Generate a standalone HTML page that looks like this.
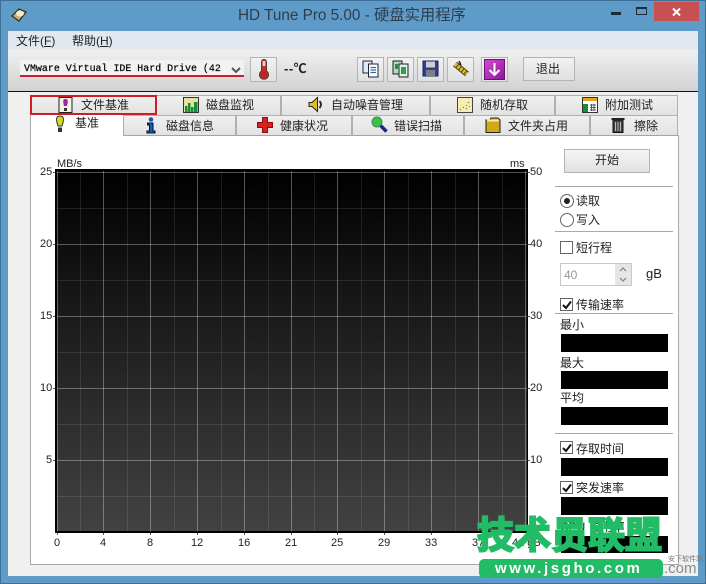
<!DOCTYPE html>
<html><head><meta charset="utf-8"><style>
*{box-sizing:border-box}
html,body{margin:0;padding:0}
body{width:706px;height:584px;position:relative;overflow:hidden;background:#5f9bc9;font-family:"Liberation Sans","Noto Sans CJK SC",sans-serif;font-size:12px;color:#222}
.a{position:absolute}
.t{position:absolute;white-space:nowrap;line-height:14px}
.tab{position:absolute;background:linear-gradient(#f0f0f0,#e2e2e2);border:1px solid #b0b0b0;border-bottom-color:#a4a4a4}
.btn{position:absolute;background:linear-gradient(#f2f2f2,#e0e0e0);border:1px solid #b4b4b4}
.blk{position:absolute;background:#000;left:561px;width:107px}
.line{position:absolute;background:#a8a8a8;height:1px}
.cb{position:absolute;width:13px;height:13px;border:1px solid #666;background:#fff}
svg{position:absolute;overflow:visible}
</style></head><body>
<div class="a" style="left:0;top:0;width:706px;height:1px;background:#3f6f96"></div>
<div class="a" style="left:0;top:0;width:1px;height:584px;background:#3f6f96"></div>
<div class="a" style="left:0;top:583px;width:706px;height:1px;background:#3f6f96"></div>
<div class="a" style="left:705px;top:0;width:1px;height:584px;background:#3f6f96"></div>
<!-- Title bar -->
<svg style="left:11px;top:7px" width="16" height="15"><path d="M1 9 L8 2 L15 5 L8 14 Z" fill="#c8b078" stroke="#3a3020" stroke-width="1.300"/><ellipse cx="9" cy="6.500" rx="4" ry="3" fill="#f4ecd0"/></svg>
<div class="t" style="left:238px;top:6px;font-size:15.300px;line-height:19px;color:#2d3d4d">HD Tune Pro 5.00 - 硬盘实用程序</div>
<div class="a" style="left:611px;top:12px;width:10px;height:3px;background:#1c2a38"></div>
<div class="a" style="left:636px;top:7px;width:11px;height:8px;border:1px solid #1c2a38;border-top-width:2px"></div>
<div class="a" style="left:654px;top:2px;width:45px;height:19px;background:#c75050"></div>
<svg style="left:672px;top:8px" width="9" height="8"><path d="M1 0.500L8 7.500M8 0.500L1 7.500" stroke="#fff" stroke-width="2"/></svg>
<!-- Client -->
<div class="a" style="left:8px;top:31px;width:690px;height:545px;background:#f0f0f0"></div>
<div class="a" style="left:8px;top:31px;width:690px;height:19px;background:#e1e8f0"></div>
<div class="t" style="left:16px;top:34px">文件(<u>F</u>)</div>
<div class="t" style="left:72px;top:34px">帮助(<u>H</u>)</div>
<div class="a" style="left:8px;top:50px;width:690px;height:41px;background:linear-gradient(#f0f0f0,#d2d2d2)"></div>
<div class="a" style="left:8px;top:91px;width:690px;height:1px;background:#111"></div>
<!-- Drive combo -->
<div class="a" style="left:20px;top:60px;width:224px;height:16px;background:#f2f2f2"></div>
<div class="t" style="left:24px;top:62px;font-family:'Liberation Mono',monospace;font-size:9.950px;color:#000;-webkit-text-stroke:.2px #000">VMware Virtual IDE Hard Drive (42</div>
<svg style="left:231px;top:67px" width="10" height="7"><path d="M1 1 L5 5 L9 1" fill="none" stroke="#555" stroke-width="2"/></svg>
<div class="a" style="left:20px;top:75px;width:224px;height:2px;background:#c8202a"></div>
<!-- Temp -->
<div class="btn" style="left:250px;top:57px;width:27px;height:25px"></div>
<svg style="left:258px;top:59px" width="12" height="21"><path d="M3.500 3a2.500 2.500 0 0 1 5 0V12a4.500 4.500 0 1 1-5 0Z" fill="#b83030" stroke="#5a3030"/><rect x="4.500" y="2" width="3" height="5" fill="#ecc8c0"/><circle cx="6" cy="15" r="3" fill="#c82020"/></svg>
<div class="t" style="left:284px;top:62px;font-weight:bold;font-size:13px;color:#222;letter-spacing:.5px">--℃</div>
<!-- Toolbar icons -->
<div class="btn" style="left:357px;top:57px;width:27px;height:25px"></div>
<svg style="left:362px;top:60px" width="18" height="18"><rect x="1" y="1" width="9" height="12" fill="#dceaf8" stroke="#223"/><rect x="6.500" y="4" width="9.500" height="13" fill="#fff" stroke="#223"/><path d="M8.500 7.500h5.500M8.500 10h5.500M8.500 12.500h5.500" stroke="#2a6ab8" stroke-width="1.200"/></svg>
<div class="btn" style="left:387px;top:57px;width:27px;height:25px"></div>
<svg style="left:392px;top:60px" width="18" height="18"><rect x="1" y="1" width="9" height="13" fill="#b8dcb0" stroke="#123"/><rect x="7" y="4" width="9" height="13" fill="#e4f2e0" stroke="#123"/><rect x="9" y="7" width="5" height="7" fill="#2fa04a"/><rect x="3" y="4" width="3" height="5" fill="#2a8a48"/></svg>
<div class="btn" style="left:417px;top:57px;width:27px;height:25px"></div>
<svg style="left:422px;top:60px" width="17" height="17"><rect x="1" y="1" width="15" height="15" fill="#2e3f94" stroke="#1a2460"/><rect x="4" y="1.500" width="9" height="6" fill="#d0d0d0"/><rect x="4" y="10" width="9" height="6" fill="#808080"/></svg>
<div class="btn" style="left:447px;top:57px;width:27px;height:25px"></div>
<svg style="left:452px;top:60px" width="18" height="18"><path d="M3 4 L15 14" stroke="#4a4008" stroke-width="6"/><path d="M3 4 L15 14" stroke="#d8c040" stroke-width="4" stroke-dasharray="2.500 1"/><path d="M7 1l2 4" stroke="#222" stroke-width="1.500"/></svg>
<div class="btn" style="left:481px;top:57px;width:27px;height:25px"></div>
<div class="a" style="left:484px;top:59px;width:21px;height:21px;background:linear-gradient(135deg,#d848d8,#8a1a98);border:1px solid #6a1078"></div>
<svg style="left:487px;top:62px" width="15" height="15"><path d="M7.500 1V13M2.500 8L7.500 13L12.500 8" fill="none" stroke="#fff" stroke-width="2"/></svg>
<div class="btn" style="left:523px;top:57px;width:52px;height:24px"></div>
<div class="t" style="left:536px;top:62px">退出</div>
<!-- Tabs row 1 -->
<div class="tab" style="left:30px;top:95px;width:126px;height:21px"></div>
<div class="tab" style="left:156px;top:95px;width:125px;height:21px"></div>
<div class="tab" style="left:281px;top:95px;width:149px;height:21px"></div>
<div class="tab" style="left:430px;top:95px;width:125px;height:21px"></div>
<div class="tab" style="left:555px;top:95px;width:123px;height:21px"></div>
<div class="a" style="left:30px;top:95px;width:127px;height:20px;border:2.500px solid #d01c24"></div>
<svg style="left:58px;top:97px" width="16" height="16"><rect x="1" y="0.500" width="13" height="15" fill="#f4f0e4" stroke="#222"/><path d="M7.500 2c-3 0-2.500 3-1.500 7h3c1-4 1.500-7-1.500-7Z" fill="#a020b0"/><rect x="6" y="11" width="3" height="3" fill="#333"/></svg>
<div class="t" style="left:81px;top:98px">文件基准</div>
<svg style="left:183px;top:97px" width="16" height="16"><rect x="0.500" y="0.500" width="15" height="15" fill="#e8e0a0" stroke="#333"/><path d="M2 15V9h2.500V15ZM5 15V6h2.500V15ZM8 15V10h2.500V15ZM11 15V5h3.500V15Z" fill="#129038"/></svg>
<div class="t" style="left:206px;top:98px">磁盘监视</div>
<svg style="left:308px;top:97px" width="17" height="15"><path d="M1 5.500h3L9.500 0.500V14.500L4 9.500H1Z" fill="#e0c020" stroke="#222"/><path d="M11.500 4q3 3.500 0 7" fill="none" stroke="#222" stroke-width="1.800"/></svg>
<div class="t" style="left:331px;top:98px">自动噪音管理</div>
<svg style="left:457px;top:97px" width="16" height="16"><rect x="0.500" y="0.500" width="15" height="15" fill="#f6eeb0" stroke="#444"/><path d="M3 13l1-1M6 11l1-1M9 9l1-1M11 6l1-1M9 12l1-1M12 10l1-1" stroke="#777"/></svg>
<div class="t" style="left:480px;top:98px">随机存取</div>
<svg style="left:582px;top:97px" width="16" height="16"><rect x="0.500" y="0.500" width="15" height="15" fill="#fff" stroke="#333"/><rect x="1" y="1" width="14" height="3" fill="#e8a020"/><rect x="1" y="7" width="5" height="8" fill="#129038"/><path d="M8 8h6M8 10.500h6M8 13h6M9.500 7v7M12 7v7" stroke="#556"/></svg>
<div class="t" style="left:605px;top:98px">附加测试</div>
<!-- Panel -->
<div class="a" style="left:30px;top:135px;width:649px;height:430px;background:#fff;border:1px solid #a8a8a8"></div>
<!-- Tabs row 2 -->
<div class="a" style="left:30px;top:115px;width:94px;height:22px;background:#fff;border-left:1px solid #a8a8a8"></div>
<div class="tab" style="left:123px;top:115px;width:113px;height:21px"></div>
<div class="tab" style="left:236px;top:115px;width:116px;height:21px"></div>
<div class="tab" style="left:352px;top:115px;width:112px;height:21px"></div>
<div class="tab" style="left:464px;top:115px;width:126px;height:21px"></div>
<div class="tab" style="left:590px;top:115px;width:88px;height:21px"></div>
<svg style="left:54px;top:115px" width="12" height="18"><path d="M6 1C1.500 1 2 5 4 11H8C10 5 10.500 1 6 1Z" fill="#d8d820" stroke="#333"/><rect x="4" y="12.500" width="4" height="4.500" fill="#333"/></svg>
<div class="t" style="left:75px;top:116px">基准</div>
<svg style="left:145px;top:117px" width="12" height="17"><circle cx="6" cy="2.500" r="2.300" fill="#1a58b8"/><path d="M2.500 6H8V14H10V16H2V14H4.500V8H2.500Z" fill="#1a58b8" stroke="#012"/></svg>
<div class="t" style="left:166px;top:119px">磁盘信息</div>
<svg style="left:257px;top:117px" width="16" height="16"><path d="M5.500 0.500H10.500V5.500H15.500V10.500H10.500V15.500H5.500V10.500H0.500V5.500H5.500Z" fill="#d82020" stroke="#8a1010"/></svg>
<div class="t" style="left:280px;top:119px">健康状况</div>
<svg style="left:371px;top:116px" width="17" height="17"><path d="M9 9L15.500 15.500" stroke="#1a2a80" stroke-width="3.500"/><circle cx="6" cy="6" r="5" fill="#40c040" stroke="#3a8a60"/></svg>
<div class="t" style="left:394px;top:119px">错误扫描</div>
<svg style="left:485px;top:117px" width="16" height="17"><path d="M1 3V15.500H15V3L13 1H6L5 3Z" fill="#d0a818" stroke="#222"/><path d="M2 3.500H14" stroke="#f8e8a0" stroke-width="2"/></svg>
<div class="t" style="left:508px;top:119px">文件夹占用</div>
<svg style="left:611px;top:117px" width="14" height="16"><rect x="2" y="3" width="10" height="12.500" fill="#444" stroke="#111"/><path d="M0.500 2H13.500" stroke="#222" stroke-width="2"/><path d="M4.500 5V14M7 5V14M9.500 5V14" stroke="#bbb"/></svg>
<div class="t" style="left:634px;top:119px">擦除</div>
<!-- Chart -->
<div class="a" style="left:55px;top:169px;width:473px;height:364px;background:#000"></div>
<svg style="left:0;top:0" width="706" height="584">
<defs><linearGradient id="g" x1="0" y1="0" x2="0" y2="1"><stop offset="0" stop-color="#000"/><stop offset="1" stop-color="#424242"/></linearGradient></defs>
<rect x="57" y="171" width="470" height="360" fill="url(#g)"/>
<g stroke="#fff" stroke-opacity=".1">
<path d="M80.500 171V531M127.500 171V531M174.500 171V531M221.500 171V531M268.500 171V531M314.500 171V531M361.500 171V531M408.500 171V531M455.500 171V531M502.500 171V531"/>
<path d="M57 208.500H527M57 280.500H527M57 352.500H527M57 424.500H527M57 496.500H527"/>
</g>
<g stroke="#fff" stroke-opacity=".32">
<path d="M57.500 171V531M103.500 171V531M150.500 171V531M197.500 171V531M244.500 171V531M291.500 171V531M337.500 171V531M384.500 171V531M431.500 171V531M478.500 171V531M525.500 171V531"/>
<path d="M57 172.500H527M57 244.500H527M57 316.500H527M57 388.500H527M57 460.500H527"/>
</g>
<g stroke="#555">
<path d="M53 172.500H55M53 244.500H55M53 316.500H55M53 388.500H55M53 460.500H55M528 172.500H530M528 244.500H530M528 316.500H530M528 388.500H530M528 460.500H530"/>
<path d="M57.500 533V535M103.500 533V535M150.500 533V535M197.500 533V535M244.500 533V535M291.500 533V535M337.500 533V535M384.500 533V535M431.500 533V535"/>
</g>
</svg>
<div class="t" style="left:57px;top:157px;font-size:11px">MB/s</div>
<div class="t" style="left:510px;top:157px;font-size:11px">ms</div>
<div class="t" style="left:40px;top:165px;font-size:11px">25</div>
<div class="t" style="left:40px;top:237px;font-size:11px">20</div>
<div class="t" style="left:40px;top:309px;font-size:11px">15</div>
<div class="t" style="left:40px;top:381px;font-size:11px">10</div>
<div class="t" style="left:46px;top:453px;font-size:11px">5</div>
<div class="t" style="left:530px;top:165px;font-size:11px">50</div>
<div class="t" style="left:530px;top:237px;font-size:11px">40</div>
<div class="t" style="left:530px;top:309px;font-size:11px">30</div>
<div class="t" style="left:530px;top:381px;font-size:11px">20</div>
<div class="t" style="left:530px;top:453px;font-size:11px">10</div>
<div class="t" style="left:54px;top:536px;font-size:11px">0</div>
<div class="t" style="left:100px;top:536px;font-size:11px">4</div>
<div class="t" style="left:147px;top:536px;font-size:11px">8</div>
<div class="t" style="left:191px;top:536px;font-size:11px">12</div>
<div class="t" style="left:238px;top:536px;font-size:11px">16</div>
<div class="t" style="left:285px;top:536px;font-size:11px">21</div>
<div class="t" style="left:331px;top:536px;font-size:11px">25</div>
<div class="t" style="left:378px;top:536px;font-size:11px">29</div>
<div class="t" style="left:425px;top:536px;font-size:11px">33</div>
<div class="t" style="left:472px;top:536px;font-size:11px">37</div>
<div class="t" style="left:512px;top:536px;font-size:11px">41 gB</div>
<!-- Right column -->
<div class="btn" style="left:564px;top:149px;width:86px;height:24px;background:linear-gradient(#f4f4f4,#e2e2e2)"></div>
<div class="t" style="left:595px;top:153px">开始</div>
<div class="line" style="left:555px;top:186px;width:118px"></div>
<div class="a" style="left:560px;top:194px;width:14px;height:14px;border-radius:50%;border:1px solid #666;background:#fff"></div>
<div class="a" style="left:564px;top:198px;width:6px;height:6px;border-radius:50%;background:#222"></div>
<div class="t" style="left:576px;top:194px">读取</div>
<div class="a" style="left:560px;top:213px;width:14px;height:14px;border-radius:50%;border:1px solid #666;background:#fff"></div>
<div class="t" style="left:576px;top:213px">写入</div>
<div class="line" style="left:555px;top:231px;width:118px"></div>
<div class="cb" style="left:560px;top:241px"></div>
<div class="t" style="left:576px;top:241px">短行程</div>
<div class="a" style="left:560px;top:263px;width:72px;height:23px;border:1px solid #c8c8c8;background:#fff"></div>
<div class="t" style="left:564px;top:268px;color:#999;font-size:12px">40</div>
<div class="a" style="left:615px;top:264px;width:16px;height:21px;background:#e6e6e6"></div>
<svg style="left:619px;top:267px" width="8" height="15"><path d="M1 4L4 1L7 4M1 11L4 14L7 11" fill="none" stroke="#777"/></svg>
<div class="t" style="left:646px;top:267px;font-size:13px">gB</div>
<div class="cb" style="left:560px;top:298px"></div>
<svg style="left:562px;top:300px" width="10" height="10"><path d="M1 5L4 8L9 1.500" fill="none" stroke="#111" stroke-width="2"/></svg>
<div class="t" style="left:576px;top:298px">传输速率</div>
<div class="line" style="left:555px;top:313px;width:118px"></div>
<div class="t" style="left:560px;top:318px">最小</div>
<div class="blk" style="top:334px;height:18px"></div>
<div class="t" style="left:560px;top:356px">最大</div>
<div class="blk" style="top:371px;height:18px"></div>
<div class="t" style="left:560px;top:391px">平均</div>
<div class="blk" style="top:407px;height:18px"></div>
<div class="line" style="left:555px;top:433px;width:118px"></div>
<div class="cb" style="left:560px;top:441px"></div>
<svg style="left:562px;top:443px" width="10" height="10"><path d="M1 5L4 8L9 1.500" fill="none" stroke="#111" stroke-width="2"/></svg>
<div class="t" style="left:576px;top:442px">存取时间</div>
<div class="blk" style="top:458px;height:18px"></div>
<div class="cb" style="left:560px;top:481px"></div>
<svg style="left:562px;top:483px" width="10" height="10"><path d="M1 5L4 8L9 1.500" fill="none" stroke="#111" stroke-width="2"/></svg>
<div class="t" style="left:576px;top:481px">突发速率</div>
<div class="blk" style="top:497px;height:18px"></div>
<div class="t" style="left:560px;top:520px">CPU 占用率</div>
<div class="blk" style="top:536px;height:17px"></div>
<!-- Watermark -->
<div class="t" style="left:668px;top:556px;font-size:7px;color:#777;line-height:8px">安下软件站</div>
<div class="t" style="left:664px;top:561px;font-size:15px;color:#8a8a8a;line-height:16px">.com</div>
<div class="t" style="left:477px;top:514px;font-size:37px;line-height:44px;font-weight:bold;color:#22bb66;-webkit-text-stroke:2px #22bb66">技术员联盟</div>
<div class="a" style="left:479px;top:559px;width:184px;height:19px;background:#22bb66;border-radius:5px"></div>
<div class="t" style="left:495px;top:560px;font-size:15px;line-height:17px;font-weight:bold;color:#fff;letter-spacing:2.600px">www.jsgho.com</div>
</body></html>
